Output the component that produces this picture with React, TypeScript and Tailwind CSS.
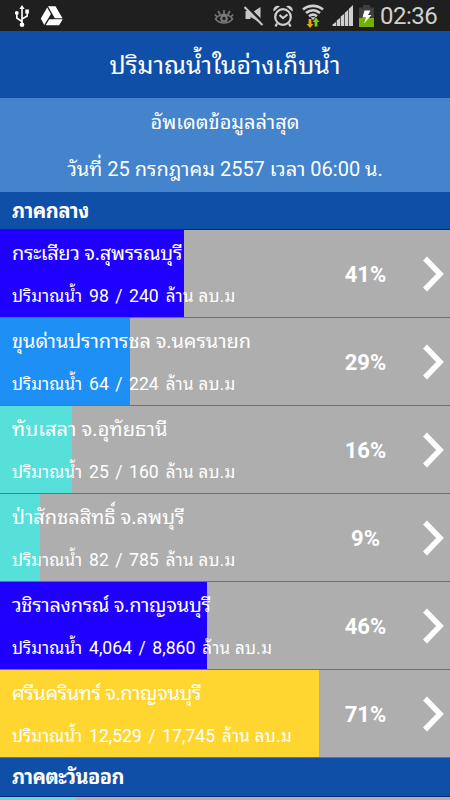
import React from 'react';

type Dam = {
    name: string;
    nameClass: string;
    current: string;
    capacity: string;
    percent: string;
    barClass: string;
};

const centralDams: Dam[] = [
    { name: 'กระเสียว จ.สุพรรณบุรี', nameClass: 'tracking-[-0.3px]', current: '98', capacity: '240', percent: '41%', barClass: 'w-[184px] bg-[#1f00ff]' },
    { name: 'ขุนด่านปราการชล จ.นครนายก', nameClass: 'tracking-[-0.1px]', current: '64', capacity: '224', percent: '29%', barClass: 'w-[130px] bg-[#1e8ff5]' },
    { name: 'ทับเสลา จ.อุทัยธานี', nameClass: 'tracking-[0.1px]', current: '25', capacity: '160', percent: '16%', barClass: 'w-[72px] bg-[#57e0da]' },
    { name: 'ป่าสักชลสิทธิ์ จ.ลพบุรี', nameClass: '', current: '82', capacity: '785', percent: '9%', barClass: 'w-[40px] bg-[#57e0da]' },
    { name: 'วชิราลงกรณ์ จ.กาญจนบุรี', nameClass: 'tracking-[-0.3px]', current: '4,064', capacity: '8,860', percent: '46%', barClass: 'w-[207px] bg-[#1f00ff]' },
    { name: 'ศรีนครินทร์ จ.กาญจนบุรี', nameClass: 'tracking-[-0.4px]', current: '12,529', capacity: '17,745', percent: '71%', barClass: 'w-[319px] bg-[#ffd62f]' },
];

const StatusBar = () => (
    <div className="flex h-[31px] shrink-0 items-center bg-[#1f1f1f] text-[#d0d0d0]">
        <svg className="ml-[14px] h-[24px] w-[16px]" viewBox="0 0 16 24" fill="none" stroke="#fff" strokeWidth="1.6">
            <path d="M8 4v15M8 17.500L2.800 14V9M8 15l5.200-3V8" />
            <path d="M8 1l2.600 4H5.400z" fill="#fff" stroke="none" />
            <circle cx="8" cy="20.700" r="2.300" fill="#fff" stroke="none" />
            <circle cx="2.800" cy="9" r="1.900" fill="#fff" stroke="none" />
            <path d="M11.300 5.500h3.600v4h-3.600z" fill="#fff" stroke="none" />
        </svg>
        <svg className="ml-[10px] h-[21px] w-[24px]" viewBox="0 0 24 21" fill="#fff">
            <path d="M8 1.200h7.500l7 12h-7.700zM7.200 2.400l3.700 6.500-6.700 11L.8 13.400zM9.300 14.200h13.400l-3.600 6H5.700z" />
        </svg>
        <svg className="ml-[150px] h-[18px] w-[20px]" viewBox="0 0 20 18" fill="none" stroke="#777" strokeWidth="1.500">
            <path d="M1.500 12c4-6 13-6 17 0-4 5.300-13 5.300-17 0z" />
            <circle cx="10" cy="11.500" r="2.800" strokeWidth="2.200" />
            <path d="M10 3v4.500M4.200 4l1.800 3.500M15.800 4L14 7.500M.8 7.500l2.400 2.300M19.200 7.500l-2.400 2.300" strokeWidth="1.700" />
        </svg>
        <svg className="ml-[10px] h-[21px] w-[20px]" viewBox="0 0 20 21" fill="#c7c7c7">
            <path d="M1.500 6h5v8h-5zM6.500 8.500L16.500 2v16l-10-6z" />
            <path d="M1.500.5L20 18.500" stroke="#1f1f1f" strokeWidth="3" />
            <path d="M.5 2L18.500 20" stroke="#c7c7c7" strokeWidth="2" />
        </svg>
        <svg className="ml-[9px] h-[22px] w-[20px]" viewBox="0 0 20 22" fill="none" stroke="#d0d0d0" strokeWidth="2.200">
            <circle cx="10" cy="12" r="7.800" />
            <path d="M6.500 10L10 13l4.500-3.500M4 18.500L2.500 21.500M16 18.500l1.500 3" />
            <path d="M.5 6.500A4.500 4.500 0 0 1 7 1.300zM19.500 6.500a4.500 4.500 0 0 0-6.500-5.200z" fill="#d0d0d0" stroke="none" />
        </svg>
        <svg className="ml-[8px] h-[24px] w-[24px]" viewBox="0 0 24 24" fill="none" stroke="#d0d0d0" strokeWidth="2.600">
            <path d="M2 5.500c6-4.800 14-4.800 20 0M5 9c4.300-3.600 9.700-3.600 14 0M8 12.200c2.500-1.900 5.500-1.900 8 0" />
            <path d="M9.500 13.200h5L12 16z" fill="#d0d0d0" stroke="none" />
            <path d="M7.600 15h2.800v5h2L9 24l-3.400-4h2z" fill="#e6a700" stroke="none" />
            <path d="M13.600 22.500h2.800V18h2L15 13.500 11.600 18h2z" fill="#80cc00" stroke="none" />
        </svg>
        <svg className="ml-[7px] h-[21px] w-[22px]" viewBox="0 0 22 21" fill="#d0d0d0">
            <path d="M.5 21v-1.500L4 17v4zM4.700 21v-5.500L8 13v8zM8.700 21v-9.500L12 9v12zM12.700 21V8L16 5v16zM16.700 21V4l4.300-4v21z" />
        </svg>
        <svg className="ml-[5px] h-[22px] w-[15px]" viewBox="0 0 15 22">
            <path d="M4 0h7v2.500h4V22H0V2.500h4z" fill="#3f3f3f" />
            <path d="M0 13h15v9H0z" fill="#75b000" />
            <path d="M5.500 5.500h6L9 10h3.500L5 18.500 7 12.500H3.500z" fill="#fff" />
        </svg>
        <span className="ml-[6px] font-[Roboto] text-[24px] leading-none tracking-[-0.5px]">02:36</span>
    </div>
);

const SectionHeader = ({ title, className }: { title: string; className: string }) => (
    <div className={`shrink-0 border-b border-[#082b7c] bg-[#104fa7] px-3 text-[20px] font-bold leading-[38px] ${className}`}>
        {title}
    </div>
);

const DamRow = ({ dam }: { dam: Dam }) => (
    <div className="relative flex h-[88px] shrink-0 items-center border-b border-black/35 bg-[#aeaeae]">
        <div className={`absolute left-0 top-0 h-full ${dam.barClass}`} />
        <div className="relative h-full flex-1 whitespace-nowrap pl-3">
            <div className={`h-[44px] text-[20px] leading-[46px] ${dam.nameClass}`}>{dam.name}</div>
            <div className="flex h-[45px] items-center text-[17px]">
                <span className="w-[77px] tracking-[0.1px]">ปริมาณน้ำ</span>
                <span className="font-[Roboto] text-[17.6px]">{dam.current}</span>
                <span className="mx-[6.500px] font-[Roboto] text-[17.6px]">/</span>
                <span className="font-[Roboto] text-[17.6px]">{dam.capacity}</span>
                <span className="ml-[7px] tracking-[0.3px]">ล้าน ลบ.ม</span>
            </div>
        </div>
        <div className="absolute left-[315px] top-[30px] w-[101px] text-center font-[Roboto] text-[22px] font-bold leading-[30px]">{dam.percent}</div>
        <svg className="relative mr-[6px] h-[36px] w-[22px]" viewBox="0 0 22 36" fill="none" stroke="#fff" strokeWidth="5.500">
            <path d="M3 2.500L18 18 3 33.500" />
        </svg>
    </div>
);

export default function App() {
    return (
        <main className="flex h-[800px] w-[450px] flex-col overflow-hidden bg-[#aeaeae] font-[Roboto,'Noto_Sans_Thai_Looped',Waree,serif] text-white">
            <StatusBar />
            <h1 className="h-[67px] shrink-0 bg-[#104fa7] text-center text-[25px] leading-[70px]">ปริมาณน้ำในอ่างเก็บน้ำ</h1>
            <div className="h-[94px] shrink-0 bg-[#4384cc] text-center text-[20px] leading-[47px]">
                <p className="pt-px">อัพเดตข้อมูลล่าสุด</p>
                <p>วันที่ 25 กรกฎาคม 2557 เวลา 06:00 น.</p>
            </div>
            <SectionHeader title="ภาคกลาง" className="h-[38px] tracking-[-0.4px]" />
            {centralDams.map((dam) => (
                <DamRow key={dam.name} dam={dam} />
            ))}
            <SectionHeader title="ภาคตะวันออก" className="h-[39px] tracking-[-0.6px]" />
            <div className="h-[3px] w-[76px] shrink-0 bg-[#57e0da]" />
        </main>
    );
}
